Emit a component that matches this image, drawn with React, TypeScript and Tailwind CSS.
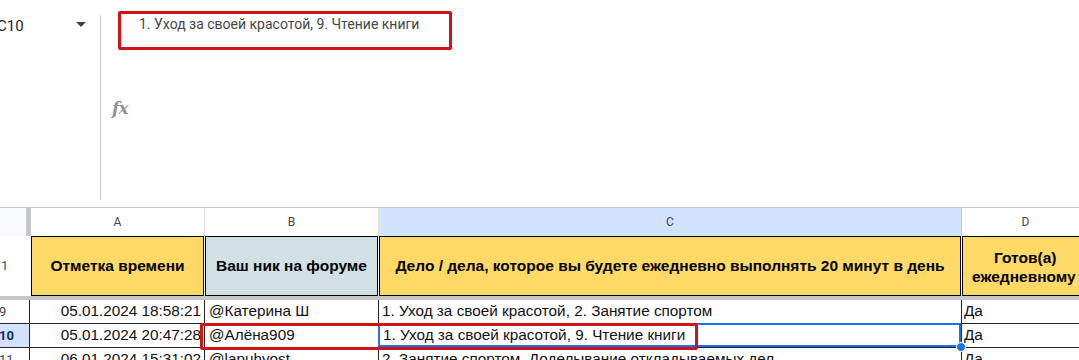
import React from 'react';

const cellFont = { fontFamily: '"Liberation Sans", Arial, sans-serif' };

const rows = [
  { n: '9', a: '05.01.2024 18:58:21', b: '@Катерина Ш', c: '1. Уход за своей красотой, 2. Занятие спортом', d: 'Да' },
  { n: '10', a: '05.01.2024 20:47:28', b: '@Алёна909', c: '1. Уход за своей красотой, 9. Чтение книги', d: 'Да', active: true },
  { n: '11', a: '06.01.2024 15:31:02', b: '@lapuhvost', c: '2. Занятие спортом, Доделывание откладываемых дел', d: 'Да' },
];

const App: React.FC = () => {
  return (
    <div className="w-[1079px] h-[360px] overflow-hidden bg-white relative" style={cellFont}>
      {/* Formula bar */}
      <div className="h-[208px] flex border-b border-[#c7c7c7]">
        <div className="w-[100px] flex items-start pt-[15px] pr-[14px]">
          <span className="text-[15px] text-[#1f1f1f] -ml-[3px] font-['Roboto']">C10</span>
          <span className="ml-auto mt-[7px] w-0 h-0 border-l-[5px] border-r-[5px] border-t-[5px] border-l-transparent border-r-transparent border-t-[#444]" />
        </div>
        <div className="w-px bg-[#c7c7c7] mt-[15px] mb-[7px]" />
        <div className="flex-1 flex">
          <div className="w-[32px] flex pl-[11px] pt-[96px]">
            <span className="italic font-semibold text-[17px] text-[#8f9397] font-['DejaVu_Serif'] tracking-tighter">fx</span>
          </div>
          <div className="pt-[14px] pl-[6px] text-[14px] text-[#444746] font-['Roboto']">
            1. Уход за своей красотой, 9. Чтение книги
          </div>
        </div>
      </div>

      {/* Column letters */}
      <div className="h-[28px] flex text-[12px] text-[#444746] font-['Roboto']">
        <div className="w-[26px] shrink-0 bg-[#f8f9fa]" />
        <div className="w-[5px] shrink-0 bg-[#c4c7c5]" />
        <div className="w-[174px] shrink-0 flex items-center justify-center border-r border-[#e1e1e1]">A</div>
        <div className="w-[174px] shrink-0 flex items-center justify-center border-r border-[#e1e1e1]">B</div>
        <div className="w-[583px] shrink-0 flex items-center justify-center bg-[#d3e3fd] border-r border-[#c7c7c7]">C</div>
        <div className="flex-1 flex items-center justify-center pl-[10px]">D</div>
      </div>

      {/* Header row 1 */}
      <div className="h-[60px] flex text-[15.5px] font-bold text-black">
        <div className="w-[31px] shrink-0 flex items-center text-[13px] font-normal text-[#444746] pl-[1px] font-['Roboto']">1</div>
        <div className="w-[173px] shrink-0 bg-[#ffd966] border border-black flex items-center justify-center">Отметка времени</div>
        <div className="w-[173px] shrink-0 bg-[#d0e0e3] border border-black flex items-center justify-center ml-px">Ваш ник на форуме</div>
        <div className="w-[582px] shrink-0 bg-[#ffd966] border border-black flex items-center justify-center ml-px">
          Дело / дела, которое вы будете ежедневно выполнять 20 минут в день
        </div>
        <div className="w-[300px] shrink-0 bg-[#ffd966] border border-black flex flex-col justify-center ml-px leading-[19px] whitespace-nowrap pt-[2px]">
          <span className="pl-[31px]">Готов(а)</span>
          <span className="pl-[9px]">ежедневному (</span>
        </div>
      </div>

      {/* Frozen divider */}
      <div className="h-[4px] bg-[#c4c7c5]" />

      {/* Data rows */}
      {rows.map((r) => (
        <div key={r.n} className="h-[24px] flex text-[15.3px] text-[#111] border-b border-[#222]">
          <div
            className={`w-[30px] shrink-0 flex items-center text-[13px] font-['Roboto'] -ml-[1px] ${
              r.active ? 'bg-[#d3e3fd] font-bold text-[#0b2e6b]' : 'text-[#444746]'
            }`}
          >
            {r.n}
          </div>
          <div className="w-[175px] shrink-0 border-l border-[#222] flex items-center justify-end pr-[3px] whitespace-nowrap overflow-hidden">{r.a}</div>
          <div className="w-[174px] shrink-0 border-l border-[#222] flex items-center pl-[4px] whitespace-nowrap overflow-hidden">{r.b}</div>
          <div
            className={`w-[583px] shrink-0 flex items-center pl-[3px] whitespace-nowrap overflow-hidden ${
              r.active ? 'border-2 border-[#1a73e8] -mt-px' : 'border-l border-[#222]'
            }`}
          >
            {r.c}
          </div>
          <div className="flex-1 border-l border-[#222] flex items-center pl-[2px]">{r.d}</div>
        </div>
      ))}

      {/* Fill handle */}
      <div className="absolute left-[956px] top-[342px] w-[10px] h-[10px] rounded-full bg-[#1a73e8] border border-white" />

      {/* Red annotations */}
      <div className="absolute left-[118px] top-[11px] w-[334px] h-[39px] border-[3px] border-[#d0121b] rounded-[2px]" />
      <div className="absolute left-[200px] top-[323px] w-[498px] h-[27px] border-[3px] border-[#d0121b] rounded-[2px]" />
    </div>
  );
};

export default App;
